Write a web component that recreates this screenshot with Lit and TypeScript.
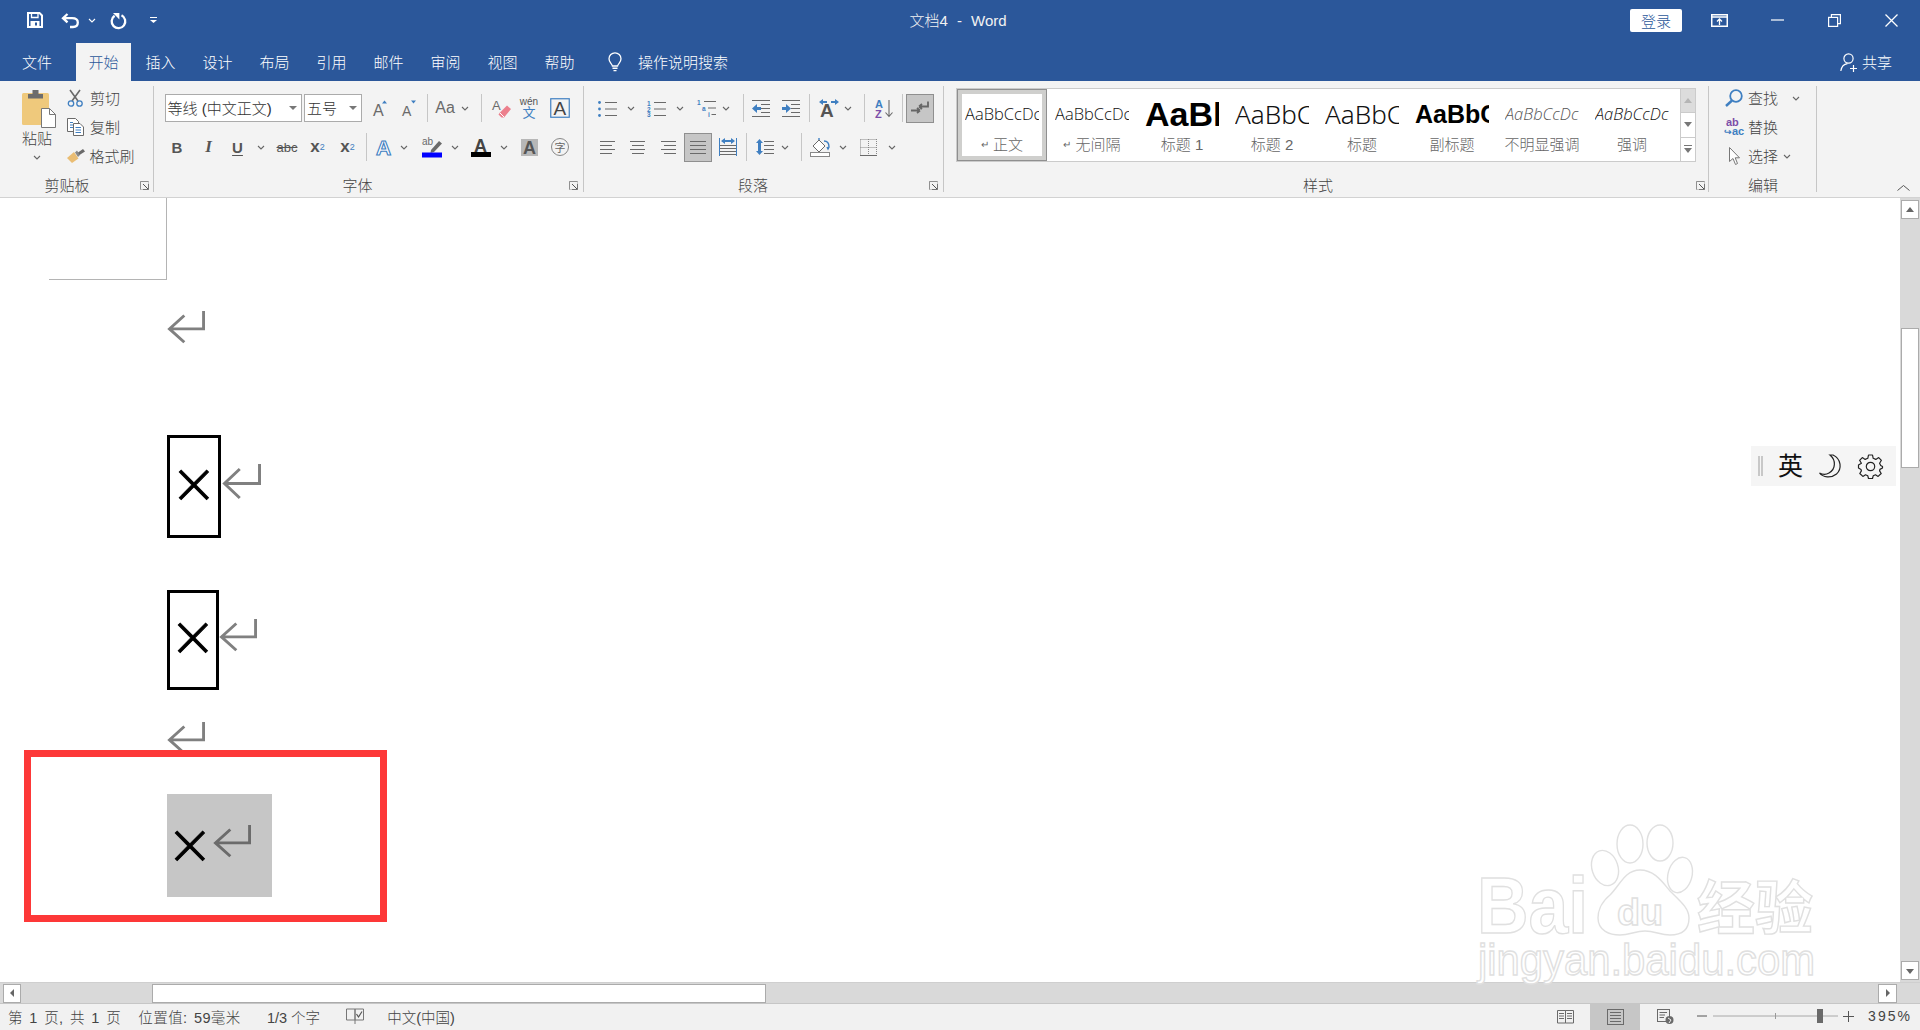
import { LitElement, html, css, svg } from "lit";
import { customElement } from "lit/decorators.js";

const BLUE = "#3f7fc1";
const G = "#6a6a6a";
const W = "#ffffff";

type It = { x: number; w: number; c?: unknown; k?: string };

const row = (x0: number, items: It[], cls = "") => {
  let prev = x0;
  return html`<div class="row ${cls}">
    ${items.map((it) => {
      const m = it.x - prev;
      prev = it.x + it.w;
      return html`<span class="it ${it.k ?? ""}" style="margin-left:${m}px;width:${it.w}px">${it.c ?? ""}</span>`;
    })}
  </div>`;
};

const ic = (w: number, h: number, b: unknown) =>
  html`<svg class="ic" width=${w} height=${h} viewBox="0 0 ${w} ${h}" fill="none">${b}</svg>`;

const chev = (c = "#666") => ic(8, 5, svg`<path d="M1 1L4 4L7 1" stroke=${c} stroke-width="1.1"/>`);
const tri = () => ic(8, 4, svg`<path d="M0 0H8L4 4Z" fill="#777"/>`);
const launcher = () =>
  ic(9, 9, svg`<path d="M.5 8.5V.5H8.5" stroke="#888"/><path d="M8.5 3V8.5H3M3 3L8 8" stroke="#555"/><path d="M.5 .5H8.5V8.5H.5Z" stroke="#999" stroke-width=".5"/>`);

const glyph = (x: number, y: number, s: number, fill: string, t: string, extra = "") =>
  svg`<text x=${x} y=${y} font-size=${s} fill=${fill} font-family="Liberation Sans" font-weight=${extra || "400"}>${t}</text>`;

const lines = (x: number, y: number, w: number, n: number, gap: number, c = G) =>
  svg`${Array.from({ length: n }, (_, i) => svg`<path d="M${x} ${y + i * gap + 0.5}H${x + w}" stroke=${c}/>`)}`;

/* title bar */
const saveIc = ic(16, 16, svg`<path d="M1 1H12.5L15 3.5V15H1Z" stroke=${W} stroke-width="2"/><path d="M4.5 1V5.5H11V1" stroke=${W} stroke-width="1.3"/><rect x="3.5" y="9" width="9" height="6" fill=${W}/><rect x="8" y="10.5" width="2" height="3" fill="#2b579a"/>`);
const undoIc = ic(18, 15, svg`<path d="M6.5 1L2 5.2L6.5 9.4M2 5.2H11C15 5.2 16.8 7 16.8 9.6C16.8 12.4 15 14 12 14H9" stroke=${W} stroke-width="2.3"/>`);
const redoIc = ic(17, 16, svg`<path d="M11.5 3.3A6.8 6.8 0 1 1 4.6 3.8" stroke=${W} stroke-width="2.3"/><path d="M3 1H9.4V7.4Z" fill=${W}/>`);
const qatIc = ic(7, 6, svg`<path d="M0 .5H7" stroke=${W}/><path d="M0 3H7L3.5 6Z" fill=${W}/>`);
const dispIc = ic(17, 13, svg`<rect x=".75" y=".75" width="15.5" height="11.5" stroke=${W} stroke-width="1.5"/><path d="M1 3H16" stroke=${W} stroke-width="1.5"/><path d="M8.5 11V5M6 7.5L8.5 5L11 7.5" stroke=${W} stroke-width="1.3"/>`);
const minIc = ic(13, 2, svg`<path d="M0 1H13" stroke=${W} stroke-width="1.2"/>`);
const restIc = ic(13, 13, svg`<rect x=".6" y="3.4" width="9" height="9" stroke=${W} stroke-width="1.2"/><path d="M3.4 3V.6H12.4V9.6H10" stroke=${W} stroke-width="1.2"/>`);
const closeIc = ic(13, 13, svg`<path d="M.5 .5L12.5 12.5M12.5 .5L.5 12.5" stroke=${W} stroke-width="1.3"/>`);
const bulbIc = ic(16, 20, svg`<path d="M5.4 14C5 11.5 2 10.5 2 6.8A6 6 0 0 1 14 6.8C14 10.5 11 11.5 10.6 14Z" stroke=${W} stroke-width="1.3"/><path d="M5.5 16.2H10.5M6.5 18.6H9.5" stroke=${W} stroke-width="1.4"/>`);
const personIc = ic(18, 19, svg`<circle cx="8.5" cy="5.5" r="4.6" stroke=${W} stroke-width="1.2"/><path d="M.8 18C1.5 13.5 4 11 7.5 10.6" stroke=${W} stroke-width="1.2"/><path d="M13.5 12V19M10 15.5H17" stroke=${W} stroke-width="1.2"/>`);

/* clipboard */
const pasteIc = ic(34, 38, svg`<rect x="0" y="3" width="27" height="32" rx="1.5" fill="#efc97c"/><rect x="6" y="4" width="15" height="4.5" fill="#6d6d6d"/><rect x="10.5" y="0" width="6" height="5" fill="#6d6d6d"/><path d="M19.5 18.5H27.5L33.5 24.5V37.5H19.5Z" fill=${W} stroke="#777"/><path d="M27.5 18.5V24.5H33.5" stroke="#777"/>`);
const cutIc = ic(16, 18, svg`<path d="M3 1L11 12M13 1L5 12" stroke="#6a6a6a" stroke-width="1.6"/><circle cx="4" cy="14.5" r="2.7" stroke=${BLUE} stroke-width="1.3"/><circle cx="12.5" cy="14.5" r="2.7" stroke=${BLUE} stroke-width="1.3"/>`);
const copyIc = ic(17, 18, svg`<path d="M.5 .5H8.5L11.5 3.5V13.5H.5Z" fill=${W} stroke="#6a6a6a"/><path d="M6.5 5.5H13L16.5 9V17.5H6.5Z" fill=${W} stroke="#6a6a6a"/><path d="M3 4.5H6M3 7H6M3 9.5H6M8.5 9.5H14M8.5 12H14M8.5 14.5H14" stroke=${BLUE}/>`);
const brushIc = ic(18, 14, svg`<path d="M0 9L7 3L11.5 9.5L5 14Z" fill="#eabd73"/><path d="M8 3.5L10 1.5L13 6L11 8Z" fill="#888"/><path d="M11 3.5L16 0L18 2.5L12.5 6Z" fill="#6a6a6a"/>`);

/* font */
const growIc = ic(14, 16, svg`${glyph(0, 15.5, 16, G, "A")}<path d="M9 3.5L11.5 .5L14 3.5Z" fill=${BLUE}/>`);
const shrinkIc = ic(14, 16, svg`${glyph(0, 15.5, 14, G, "A")}<path d="M9 .5H14L11.5 3.5Z" fill=${BLUE}/>`);
const eraseIc = ic(19, 20, svg`${glyph(0, 12, 13, G, "A")}<path d="M8 14.5L15 7.5L19 11L12 19.5H9.5L6.5 16.5Z" fill="#ec7f8c"/><path d="M8 15L12 19" stroke=${W}/>`);
const wenIc = html`<span class="wen"><span class="wen-a">wén</span><span class="wen-b">文</span></span>`;
const boxAIc = ic(20, 20, svg`<rect x=".75" y=".75" width="18.5" height="18.5" stroke=${BLUE} stroke-width="1.2"/>${glyph(3.4, 16.5, 19, "#444", "A")}`);
const outlineA = ic(16, 18, svg`<text x="0" y="17" font-size="21" font-family="Liberation Sans" font-weight="700" fill=${W} stroke=${BLUE} stroke-width="1.1">A</text>`);
const highIc = ic(20, 20, svg`${glyph(0, 8, 10, G, "ab")}<path d="M9 13L17 4L20 6.5L12 15L8.5 16Z" fill="#6a6a6a"/><rect x="0" y="15.5" width="20" height="5" fill="#0000ff"/>`);
const colorIc = ic(20, 20, svg`${glyph(3, 14.5, 18, "#444", "A", "700")}<rect x="0" y="15" width="20" height="5" fill="#000"/>`);
const shadeIc = ic(17, 17, svg`<rect width="17" height="17" fill="#b7b7b7"/>${glyph(2, 15, 18, "#555", "A", "700")}`);
const circIc = html`<span class="circ">字</span>`;

/* paragraph */
const dots = (x: number, c = BLUE) => svg`${[2.5, 9, 15.5].map((y) => svg`<circle cx=${x} cy=${y} r="1.4" fill=${c}/>`)}`;
const bulletIc = ic(19, 17, svg`${dots(1.5)}<path d="M7 2.5H19M7 9H19M7 15.5H19" stroke=${G}/>`);
const numIc = ic(19, 17, svg`<text x="0" y="5.5" font-size="6.5" font-weight="700" font-family="Liberation Sans" fill=${BLUE}>1</text><text x="0" y="11.5" font-size="6.5" font-weight="700" font-family="Liberation Sans" fill=${BLUE}>2</text><text x="0" y="17" font-size="6.5" font-weight="700" font-family="Liberation Sans" fill=${BLUE}>3</text><path d="M7 2.5H19M7 9H19M7 15.5H19" stroke=${G}/>`);
const multiIc = ic(19, 18, svg`<text x="0" y="5.5" font-size="6.5" font-weight="700" font-family="Liberation Sans" fill=${BLUE}>1</text><text x="5" y="11.5" font-size="6.5" font-weight="700" font-family="Liberation Sans" fill=${BLUE}>a</text><text x="11" y="17.5" font-size="6.5" font-weight="700" font-family="Liberation Sans" fill=${BLUE}>i</text><path d="M7 2.5H19M11 9H19M14.5 15.5H19" stroke=${G}/>`);
const outIc = ic(18, 17, svg`<path d="M0 .5H18M9 4.5H18M9 8.5H18M9 12.5H18M0 16.5H18" stroke=${G}/><path d="M0 8.5L5 4V7H9V10H5V13Z" fill=${BLUE}/>`);
const inIc = ic(18, 17, svg`<path d="M0 .5H18M9 4.5H18M9 8.5H18M9 12.5H18M0 16.5H18" stroke=${G}/><path d="M9 8.5L4 4V7H0V10H4V13Z" fill=${BLUE}/>`);
const asianIc = ic(20, 18, svg`<path d="M0 3L4 0V2H8V4H4V6ZM20 3L16 0V2H12V4H16V6Z" fill=${BLUE}/>${glyph(1, 18, 19, "#555", "A", "700")}`);
const sortIc = ic(18, 19, svg`${glyph(0, 9, 11, BLUE, "A", "700")}${glyph(0, 19, 11, "#7c4ea8", "Z", "700")}<path d="M14 1V17M10.5 13.5L14 17.5L17.5 13.5" stroke=${G} stroke-width="1.1"/>`);
const markIc = ic(18, 14, svg`<path d="M17 .5V5.5H8M8 5.5L11 3M8 5.5L11 8" stroke="#666" stroke-width="1.8"/><path d="M0 9.5H9M9 9.5L6 7M9 9.5L6 12" stroke="#666" stroke-width="1.8"/>`);
const alIc = (a: number[]) => ic(16, 14, svg`${a.map((p, i) => svg`<path d="M${p} ${i * 4 + 1.5}H${p + (i % 2 ? 12 : 15)}" stroke=${G}/>`)}`);
const justIc = ic(16, 14, lines(0, 1, 16, 4, 4));
const distIc = ic(18, 18, svg`<path d="M.5 0V18M17.5 0V18" stroke=${BLUE}/><path d="M2 3L6 0V2H12V0L16 3L12 6V4H6V6Z" fill=${BLUE}/>${lines(1, 7, 16, 4, 3)}`);
const lsIc = ic(18, 18, svg`<path d="M3.5 1L7 5H5V13H7L3.5 17L0 13H2V5H0Z" fill=${BLUE}/><path d="M8 3.5H18M8 7.5H18M8 11.5H18M8 15.5H18" stroke=${G}/>`);
const bucketIc = ic(20, 19, svg`<path d="M3 8L9 2L15 8L9 14Z" fill=${W} stroke=${G}/><path d="M9 2V0M14 3C17 3 19 5 19 9L18 11L17 9" stroke=${BLUE} stroke-width="1.4"/><rect x=".5" y="14.5" width="19" height="4" fill=${W} stroke="#888"/>`);
const borderIc = ic(17, 17, svg`<path d="M.5 .5H17M.5 8.5H17M.5 .5V17M8.5 0V17M16.5 0V17" stroke="#888" stroke-dasharray="1 1"/><path d="M0 16.5H17" stroke=${G}/>`);

/* editing */
const findIc = ic(18, 18, svg`<circle cx="11" cy="7" r="5.8" stroke=${BLUE} stroke-width="1.8"/><path d="M7 11.5L1 17" stroke=${BLUE} stroke-width="2.4"/>`);
const replIc = html`<span class="repl"><span class="repl-a">ab</span><span class="repl-b"><span class="repl-arrow">↪</span>ac</span></span>`;
const selIc = ic(11, 18, svg`<path d="M.5 .5V14.5L4 11.5L6.5 17.5L8.5 16.5L6.2 10.8H10.5Z" fill=${W} stroke="#777"/>`);

/* status */
const readIc = ic(17, 15, svg`<path d="M.5 1.5H8.5V14H.5ZM8.5 1.5H16.5V14H8.5Z" stroke=${G}/><path d="M2 4.5H7M2 7H7M2 9.5H7M10 4.5H15M10 7H15M10 9.5H15" stroke=${G}/>`);
const printIc = ic(17, 16, svg`<rect x=".5" y=".5" width="16" height="15" stroke=${G}/><path d="M3 3.5H14M3 6.5H14M3 9.5H14M3 12.5H14" stroke=${G}/>`);
const webIc = ic(17, 15, svg`<rect x=".5" y=".5" width="12" height="12" stroke=${G}/><path d="M2.5 3.5H10M2.5 6H8M2.5 8.5H7" stroke=${G}/><circle cx="12.5" cy="11" r="4" fill=${G}/><path d="M11 9L14 11L12 14" stroke="#f1f1f1"/>`);
const proofIc = ic(18, 16, svg`<path d="M.5 1H9V12H.5ZM9 1H17.5V12H9Z" stroke="#777"/><path d="M9 12V16" stroke="#777"/><path d="M10.5 6L12.5 9L16 3.5" stroke="#555" stroke-width="1.2"/>`);
const sliderIc = ic(125, 14, svg`<path d="M0 7H125" stroke="#a8a8a8"/><path d="M62.5 4V10" stroke="#999"/><rect x="104" y="0" width="6" height="14" fill=${G}/>`);
const smallMinus = ic(10, 2, svg`<path d="M0 1H10" stroke="#555"/>`);
const smallPlus = ic(11, 11, svg`<path d="M0 5.5H11M5.5 0V11" stroke="#555"/>`);

/* document */
const ret = (c = "#808080", w = 39, h = 36) =>
  html`<svg class="ic" width=${w} height=${h} viewBox="0 0 39.5 36" preserveAspectRatio="none" fill="none"><path d="M38 0V19.5H2M18 5L2.5 19.5L18 34" stroke=${c} stroke-width="3"/></svg>`;
const triBtn = (d: string) => ic(10, 10, svg`<path d=${d} fill="#666"/>`);

const moonIc = ic(24, 24, svg`<path d="M12 1C18 6 18 15 11 19C8 20.8 4.5 20.6 1.5 19C5 23.5 13 24.5 18.5 20C24 15 23.5 5 15 1Z" stroke="#222" stroke-width="1.2"/>`);
const gearIc = ic(25, 25, svg`<circle cx="12.5" cy="12.5" r="4.2" stroke="#222" stroke-width="1.2"/><path d="M10.5 1H14.5L15.2 4.3L17.8 5.4L20.7 3.6L23.4 6.3L21.6 9.2L22.7 11.4L24.5 12.5V14L21.9 15.4L21.6 16.9L23.2 19.5L20.1 22.4L17.5 20.8L15.2 21.8L14.5 24.5H10.5L9.8 21.8L7.5 20.8L4.9 22.4L1.8 19.5L3.4 16.9L3 15.4L.5 14V11L3.4 9.2L1.6 6.3L4.3 3.6L7.2 5.4L9.8 4.3Z" stroke="#222" stroke-width="1.2" stroke-linejoin="round"/>`);

const watermark = html`<svg class="wm" width="345" height="170" viewBox="0 0 345 170">
  <g class="wm-s">
    <text x="2" y="110" font-size="80" font-weight="700" textLength="111" lengthAdjust="spacingAndGlyphs">Bai</text>
    <ellipse cx="155" cy="21" rx="13" ry="19"/>
    <ellipse cx="185" cy="20" rx="13" ry="18"/>
    <ellipse cx="130" cy="45" rx="13" ry="18" transform="rotate(-18 130 45)"/>
    <ellipse cx="205" cy="52" rx="12" ry="18" transform="rotate(15 205 52)"/>
    <path d="M165 47C150 47 145 62 135 72C125 80 123 90 123 95C123 108 135 112 145 112C155 112 160 108 170 108C180 108 185 112 195 112C205 112 214 108 214 95C214 85 205 78 195 68C188 60 180 47 165 47Z"/>
    <text x="142" y="102" font-size="36" font-weight="700" textLength="46" lengthAdjust="spacingAndGlyphs">du</text>
    <text x="222" y="106" font-size="58" font-weight="700" textLength="116" lengthAdjust="spacingAndGlyphs" class="wm-cjk">经验</text>
    <text x="3" y="152" font-size="44" textLength="337" lengthAdjust="spacingAndGlyphs">jingyan.baidu.com</text>
  </g>
</svg>`;

const styles = [
  { p: "AaBbCcDc", l: "正文", k: "s-n", mark: true, sel: true },
  { p: "AaBbCcDc", l: "无间隔", k: "s-n", mark: true },
  { p: "AaBl", l: "标题 1", k: "s-h1" },
  { p: "AaBbC", l: "标题 2", k: "s-h2" },
  { p: "AaBbC", l: "标题", k: "s-h2" },
  { p: "AaBbC", l: "副标题", k: "s-sub" },
  { p: "AaBbCcDc", l: "不明显强调", k: "s-em s-light" },
  { p: "AaBbCcDc", l: "强调", k: "s-em" },
];

const tabs = ["开始", "插入", "设计", "布局", "引用", "邮件", "审阅", "视图", "帮助"];

@customElement("app-root")
export class AppRoot extends LitElement {
  static styles = css`
    :host {
      display: flex;
      flex-direction: column;
      width: 1920px;
      height: 1030px;
      overflow: hidden;
      font-family: "Liberation Sans", "Noto Sans CJK SC", sans-serif;
      font-weight: 300;
      color: #444;
      font-size: 15px;
      background: #fff;
    }
    .row { display: flex; align-items: center; }
    .it { flex: none; display: inline-flex; align-items: center; justify-content: center; white-space: nowrap; box-sizing: border-box; }
    .ic { display: block; flex: none; overflow: visible; }
    .tx { padding-bottom: 2px; }

    .head { background: #2b579a; color: #fff; height: 81px; flex: none; }
    .titlebar { height: 40px; margin-bottom: 3px; }
    .title { font-size: 15px; color: #f2f2f2; word-spacing: 5px; padding-bottom: 2px; }
    .login { background: #fff; color: #2b579a; height: 23px; border-radius: 2px; font-size: 15px; }
    .tabs { height: 38px; align-items: stretch; font-size: 15px; color: #fff; }
    .tabs .active { background: #f3f3f3; color: #2b579a; }
    .help { font-size: 15px; color: #fff; }

    .ribbon { display: flex; height: 117px; flex: none; box-sizing: border-box; padding: 5px 0; background: #f3f3f3; border-bottom: 1px solid #d2d2d2; }
    .grp { flex: none; display: flex; flex-direction: column; box-sizing: border-box; border-right: 1px solid #c6c6c6; }
    .g-clip { width: 154px; }
    .g-font { width: 430px; }
    .g-para { width: 360px; }
    .g-sty { width: 765px; }
    .g-edit { width: 108px; }
    .end { flex: 1; display: flex; align-items: flex-end; justify-content: flex-end; padding: 0 10px 0 0; }
    .tools { height: 30px; margin-top: 7px; }
    .tools + .tools { margin-top: 9px; }
    .lbl-row { margin-top: auto; height: 14px; }
    .lbl { font-size: 15px; color: #444; padding-bottom: 2px; }
    .combo { height: 28px; background: #fff; border: 1px solid #ababab; box-sizing: border-box; justify-content: space-between; padding: 0 4px 0 2px; font-size: 15px; color: #333; }
    .combo span { padding-bottom: 2px; }
    .vsep { height: 28px; background: #c6c6c6; }
    .b { font-weight: 700; font-size: 15px; color: #555; }
    .i { font-style: italic; font-family: "Liberation Serif", serif; font-weight: 700; font-size: 17px; color: #555; }
    .u { font-weight: 700; font-size: 15px; color: #555; text-decoration: underline; text-underline-offset: 2px; }
    .s { font-size: 13px; font-weight: 400; color: #555; text-decoration: line-through; }
    .sub, .sup { font-weight: 700; font-size: 17px; color: #555; }
    .sub small, .sup small { font-size: 9px; color: #3f7fc1; font-weight: 400; }
    .sub small { vertical-align: -3px; }
    .sup small { vertical-align: 6px; }
    .on { height: 29px; background: #c6c6c6; border: 1px solid #8f8f8f; box-sizing: border-box; }
    .aa { font-size: 16px; color: #6a6a6a; font-weight: 400; }
    .wen { display: flex; flex-direction: column; align-items: center; line-height: 1; }
    .wen-a { font-size: 10px; color: #555; font-weight: 400; }
    .wen-b { font-size: 13px; color: #3f7fc1; margin-top: -1px; font-weight: 400; }
    .circ { width: 18px; height: 18px; box-sizing: border-box; border: 1px solid #888; border-radius: 50%; display: flex; align-items: center; justify-content: center; font-size: 11px; color: #666; font-weight: 400; }

    .clip-body { display: flex; height: 92px; }
    .paste { width: 67px; flex: none; display: flex; flex-direction: column; padding: 4px 0 0 22px; box-sizing: border-box; }
    .paste-t { width: 30px; text-align: center; margin-top: 3px; line-height: 16px; }
    .paste-c { width: 30px; display: flex; justify-content: center; margin-top: 8px; }
    .stack { display: flex; flex-direction: column; gap: 5px; }
    .stack .row { height: 24px; }

    .gallery { margin: 2px 0 0 12px; width: 740px; height: 74px; box-sizing: border-box; display: flex; background: #fff; border: 1px solid #cbcbcb; }
    .gal-items { display: flex; width: 721px; flex: none; }
    .gal { width: 90px; height: 72px; box-sizing: border-box; flex: none; display: flex; flex-direction: column; align-items: center; }
    .gal.sel { border: 1px solid #8f8f8f; box-shadow: inset 0 0 0 4px #cfcfcd; }
    .pv { width: 74px; height: 50px; flex: none; display: flex; align-items: center; overflow: hidden; color: #111; white-space: nowrap; line-height: 1; }
    .gal.sel .pv { margin-top: -1px; }
    .gl { font-size: 15px; color: #666; height: 20px; line-height: 20px; display: flex; align-items: center; gap: 4px; margin-top: -4px; }
    .s-h1 { font: 700 34px "Liberation Sans", sans-serif; color: #000; }
    .s-h2 { font-family: "Noto Sans", sans-serif; font-size: 26px; font-weight: 300; }
    .s-sub { font: 700 25px "Liberation Sans", sans-serif; color: #000; }
    .s-n { font-family: "Open Sans", sans-serif; font-size: 16.5px; font-weight: 300; }
    .s-em { font-family: "Open Sans", sans-serif; font-size: 16.5px; font-style: italic; font-weight: 300; }
    .s-light { color: #555; }
    .mk { font-size: 10px; color: #666; }
    .gal-scroll { flex: 1; margin-left: 2px; display: flex; flex-direction: column; }
    .gs { flex: 1; display: flex; align-items: center; justify-content: center; background: #fff; border-left: 1px solid #cbcbcb; border-bottom: 1px solid #cbcbcb; }
    .gs:first-child { background: #dcdcdc; }
    .gs:last-child { border-bottom: 0; }

    .edit-rows { display: flex; flex-direction: column; gap: 5px; }
    .edit-rows .row { height: 24px; }
    .repl { display: flex; flex-direction: column; line-height: 9px; font-size: 11px; font-weight: 700; align-items: flex-start; }
    .repl-a { color: #7c4ea8; margin-left: 2px; }
    .repl-b { color: #3f7fc1; }
    .repl-arrow { font-size: 9px; }
    .collapse { margin-bottom: 1px; }

    .main { flex: 1; display: flex; min-height: 0; }
    .doc { flex: 1; position: relative; background: #fff; }
    .corner { margin-left: 49px; width: 118px; height: 82px; box-sizing: border-box; border-right: 1px solid #b4b4b4; border-bottom: 1px solid #b4b4b4; }
    .p { margin-left: 167px; display: flex; align-items: flex-start; }
    .p-a { margin-top: 31px; }
    .p-1 { margin-top: 91px; }
    .p-2 { margin-top: 52px; }
    .p-3 { margin-top: 32px; height: 36px; }
    .p-4 { margin-top: 36px; }
    .ch { font: 300 68px/1 "Open Sans", sans-serif; -webkit-text-stroke: 0.8px #000; color: #000; display: flex; align-items: center; justify-content: center; height: 40px; padding-bottom: 8px; }
    .bx { box-sizing: border-box; border: 3px solid #000; display: flex; align-items: center; justify-content: center; }
    .bx-1 { width: 54px; height: 103px; }
    .bx-2 { width: 52px; height: 100px; }
    .arrow-1 { margin: 29px 0 0 1px; }
    .arrow-2 { margin: 29px 0 0 0; }
    .gray { width: 105px; height: 103px; background: #c6c6c6; display: flex; align-items: flex-start; padding: 30px 0 0 9px; box-sizing: border-box; }
    .gray .ch { width: 28px; }
    .gray svg { margin: 1px 0 0 9px; }
    .frame { position: absolute; left: 24px; top: 552px; width: 363px; height: 172px; box-sizing: border-box; border: 7px solid #fd3838; }
    .ime { position: absolute; left: 1751px; top: 248px; width: 145px; height: 40px; background: #f5f5f5; display: flex; align-items: center; box-sizing: border-box; padding-left: 7px; }
    .handle { width: 5px; height: 20px; box-sizing: border-box; border-left: 2px solid #c8c8c8; border-right: 2px solid #c8c8c8; margin-right: 15px; }
    .ime-t { font-size: 25px; color: #111; font-weight: 400; line-height: 1; width: 25px; margin-right: 15px; }
    .ime svg:last-child { margin-left: 16px; }
    .wm { position: absolute; left: 1475px; top: 625px; }
    .wm-s { fill: #fff; stroke: #e0e0e0; stroke-width: 1.4; font-family: "Liberation Sans", sans-serif; }
    .wm-cjk { font-family: "Noto Sans CJK SC", sans-serif; }

    .vs { width: 20px; flex: none; background: #d9d9d9; display: flex; flex-direction: column; padding: 2px 1px 2px 1px; box-sizing: border-box; align-items: center; }
    .sb-btn { width: 18px; height: 19px; box-sizing: border-box; background: #fff; border: 1px solid #ababab; display: flex; align-items: center; justify-content: center; flex: none; }
    .thumb-v { width: 18px; height: 140px; box-sizing: border-box; background: #fff; border: 1px solid #ababab; margin-top: 109px; flex: none; }
    .vs .sb-btn:last-child { margin-top: auto; }
    .hs { height: 21px; flex: none; background: #d9d9d9; border-top: 1px solid #cfcfcf; box-sizing: border-box; }
    .hs .it { height: 19px; background: #fff; border: 1px solid #ababab; box-sizing: border-box; }
    .status { height: 27px; flex: none; background: #f1f1f1; border-top: 1px solid #c6c6c6; box-sizing: border-box; color: #444; font-size: 14.5px; align-items: stretch; }
    .status .it:not(.cur) { padding-bottom: 2px; }
    .wide { word-spacing: 2px; letter-spacing: .4px; }
    .cur { background: #c6c6c6; }
    .pct { letter-spacing: 2px; font-size: 14px; }
  `;

  render() {
    return html`
      <div class="head">
        ${row(0, [
          { x: 27, w: 16, c: saveIc },
          { x: 61, w: 18, c: undoIc },
          { x: 88, w: 8, c: chev("#fff") },
          { x: 110, w: 17, c: redoIc },
          { x: 150, w: 7, c: qatIc },
          { x: 903, w: 110, c: "文档4 - Word", k: "title" },
          { x: 1630, w: 52, c: "登录", k: "login" },
          { x: 1711, w: 17, c: dispIc },
          { x: 1771, w: 13, c: minIc },
          { x: 1828, w: 13, c: restIc },
          { x: 1885, w: 13, c: closeIc },
        ], "titlebar")}
        ${row(0, [
          { x: 9.5, w: 55, c: "文件", k: "tx" },
          ...tabs.map((t, i) => ({ x: 76 + i * 57, w: 55, c: t, k: i === 0 ? "active tx" : "tx" })),
          { x: 607, w: 16, c: bulbIc },
          { x: 637, w: 92, c: "操作说明搜索", k: "help tx" },
          { x: 1840, w: 18, c: personIc },
          { x: 1862, w: 30, c: "共享", k: "help tx" },
        ], "tabs")}
      </div>

      <div class="ribbon">
        <div class="grp g-clip">
          <div class="clip-body">
            <div class="paste">
              ${pasteIc}
              <div class="paste-t">粘贴</div>
              <div class="paste-c">${chev()}</div>
            </div>
            <div class="stack">
              ${row(67, [{ x: 67, w: 16, c: cutIc }, { x: 90, w: 30, c: "剪切", k: "tx" }])}
              ${row(67, [{ x: 67, w: 17, c: copyIc }, { x: 90, w: 30, c: "复制", k: "tx" }])}
              ${row(67, [{ x: 67, w: 18, c: brushIc }, { x: 90, w: 44, c: "格式刷", k: "tx" }])}
            </div>
          </div>
          ${row(0, [{ x: 45, w: 44, c: "剪贴板", k: "lbl" }, { x: 140, w: 9, c: launcher() }], "lbl-row")}
        </div>

        <div class="grp g-font">
          ${row(154, [
            { x: 164.5, w: 137, c: html`<span>等线 (中文正文)</span>${tri()}`, k: "combo" },
            { x: 304, w: 58, c: html`<span>五号</span>${tri()}`, k: "combo" },
            { x: 373, w: 14, c: growIc },
            { x: 402, w: 14, c: shrinkIc },
            { x: 426.5, w: 1, k: "vsep" },
            { x: 437, w: 16, c: "Aa", k: "aa" },
            { x: 461, w: 8, c: chev() },
            { x: 481, w: 1, k: "vsep" },
            { x: 492, w: 19, c: eraseIc },
            { x: 521, w: 16, c: wenIc },
            { x: 550, w: 20, c: boxAIc },
          ], "tools")}
          ${row(154, [
            { x: 172, w: 10, c: "B", k: "b" },
            { x: 204, w: 9, c: "I", k: "i" },
            { x: 232, w: 11, c: "U", k: "u" },
            { x: 257, w: 8, c: chev() },
            { x: 277, w: 20, c: "abc", k: "s" },
            { x: 310, w: 15, c: html`x<small>2</small>`, k: "sub" },
            { x: 340, w: 15, c: html`x<small>2</small>`, k: "sup" },
            { x: 365.5, w: 1, k: "vsep" },
            { x: 376, w: 16, c: outlineA },
            { x: 400, w: 8, c: chev() },
            { x: 422, w: 20, c: highIc },
            { x: 451, w: 8, c: chev() },
            { x: 471, w: 20, c: colorIc },
            { x: 500, w: 8, c: chev() },
            { x: 521, w: 17, c: shadeIc },
            { x: 551, w: 18, c: circIc },
          ], "tools")}
          ${row(154, [{ x: 342, w: 31, c: "字体", k: "lbl" }, { x: 569, w: 9, c: launcher() }], "lbl-row")}
        </div>

        <div class="grp g-para">
          ${row(584, [
            { x: 598, w: 19, c: bulletIc },
            { x: 627, w: 8, c: chev() },
            { x: 647, w: 19, c: numIc },
            { x: 676, w: 8, c: chev() },
            { x: 697, w: 19, c: multiIc },
            { x: 722, w: 8, c: chev() },
            { x: 743, w: 1, k: "vsep" },
            { x: 752, w: 18, c: outIc },
            { x: 782, w: 18, c: inIc },
            { x: 809, w: 1, k: "vsep" },
            { x: 819, w: 20, c: asianIc },
            { x: 844, w: 8, c: chev() },
            { x: 864, w: 1, k: "vsep" },
            { x: 875, w: 18, c: sortIc },
            { x: 902, w: 1, k: "vsep" },
            { x: 906, w: 28, c: markIc, k: "on" },
          ], "tools")}
          ${row(584, [
            { x: 600, w: 16, c: alIc([0, 0, 0, 0]) },
            { x: 630, w: 16, c: alIc([0, 2, 0, 2]) },
            { x: 660, w: 16, c: alIc([1, 4, 1, 4]) },
            { x: 684, w: 28, c: justIc, k: "on" },
            { x: 719, w: 18, c: distIc },
            { x: 746, w: 1, k: "vsep" },
            { x: 756, w: 18, c: lsIc },
            { x: 781, w: 8, c: chev() },
            { x: 801, w: 1, k: "vsep" },
            { x: 810, w: 20, c: bucketIc },
            { x: 839, w: 8, c: chev() },
            { x: 860, w: 17, c: borderIc },
            { x: 888, w: 8, c: chev() },
          ], "tools")}
          ${row(584, [{ x: 738, w: 30, c: "段落", k: "lbl" }, { x: 929, w: 9, c: launcher() }], "lbl-row")}
        </div>

        <div class="grp g-sty">
          <div class="gallery">
            <div class="gal-items">
              ${styles.map(
                (s) => html`<div class="gal ${s.sel ? "sel" : ""}">
                  <div class="pv ${s.k}">${s.p}</div>
                  <div class="gl">${s.mark ? html`<span class="mk">↵</span>` : ""}${s.l}</div>
                </div>`
              )}
            </div>
            <div class="gal-scroll">
              <div class="gs">${ic(8, 5, svg`<path d="M0 5L4 0L8 5Z" fill="#b5b5b5"/>`)}</div>
              <div class="gs">${ic(8, 5, svg`<path d="M0 0H8L4 5Z" fill="#777"/>`)}</div>
              <div class="gs">${ic(8, 9, svg`<path d="M0 .5H8" stroke="#777"/><path d="M0 3H8L4 8Z" fill="#777"/>`)}</div>
            </div>
          </div>
          ${row(943, [{ x: 1302, w: 30, c: "样式", k: "lbl" }, { x: 1695, w: 9, c: launcher() }], "lbl-row")}
        </div>

        <div class="grp g-edit">
          <div class="edit-rows">
            ${row(1709, [{ x: 1725, w: 18, c: findIc }, { x: 1748, w: 30, c: "查找", k: "tx" }, { x: 1792, w: 8, c: chev() }])}
            ${row(1709, [{ x: 1724, w: 20, c: replIc }, { x: 1748, w: 30, c: "替换", k: "tx" }])}
            ${row(1709, [{ x: 1729, w: 11, c: selIc }, { x: 1748, w: 30, c: "选择", k: "tx" }, { x: 1783, w: 8, c: chev() }])}
          </div>
          ${row(1709, [{ x: 1748, w: 30, c: "编辑", k: "lbl" }], "lbl-row")}
        </div>
        <div class="end"><span class="collapse">${ic(13, 6, svg`<path d="M.5 5.5L6.5 .5L12.5 5.5" stroke="#555"/>`)}</span></div>
      </div>

      <div class="main">
        <div class="doc">
          <div class="corner"></div>
          <div class="p p-a">${ret("#808080", 38, 33)}</div>
          <div class="p p-1">
            <div class="bx bx-1"><span class="ch">×</span></div>
            <div class="arrow-1">${ret()}</div>
          </div>
          <div class="p p-2">
            <div class="bx bx-2"><span class="ch">×</span></div>
            <div class="arrow-2">${ret("#808080", 38, 33)}</div>
          </div>
          <div class="p p-3">${ret("#808080", 38, 33)}</div>
          <div class="p p-4">
            <div class="gray"><span class="ch">×</span>${ret("#6b6b6b", 38, 33)}</div>
          </div>
          <div class="frame"></div>
          ${watermark}
          <div class="ime">
            <span class="handle"></span>
            <span class="ime-t">英</span>
            ${moonIc}${gearIc}
          </div>
        </div>
        <div class="vs">
          <div class="sb-btn">${triBtn("M1 7L5 2L9 7Z")}</div>
          <div class="thumb-v"></div>
          <div class="sb-btn">${triBtn("M1 3H9L5 8Z")}</div>
        </div>
      </div>

      ${row(0, [
        { x: 2.5, w: 18, c: triBtn("M7 1V9L3 5Z") },
        { x: 152, w: 614 },
        { x: 1878, w: 19, c: triBtn("M3 1V9L7 5Z") },
      ], "hs")}

      ${row(0, [
        { x: 10, w: 109, c: "第 1 页, 共 1 页", k: "wide" },
        { x: 139, w: 101, c: "位置值: 59毫米", k: "wide" },
        { x: 265, w: 57, c: "1/3 个字" },
        { x: 346, w: 18, c: proofIc },
        { x: 387, w: 68, c: "中文(中国)" },
        { x: 1557, w: 17, c: readIc },
        { x: 1590, w: 50, c: printIc, k: "cur" },
        { x: 1657, w: 17, c: webIc },
        { x: 1697, w: 10, c: smallMinus },
        { x: 1713, w: 125, c: sliderIc },
        { x: 1843, w: 11, c: smallPlus },
        { x: 1871, w: 38, c: "395%", k: "pct" },
      ], "status")}
    `;
  }
}
